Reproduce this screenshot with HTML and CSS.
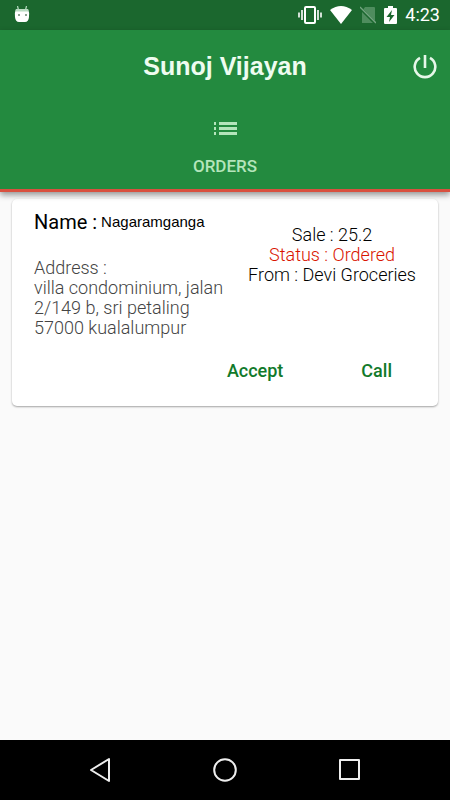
FILE: index.html
```html
<!DOCTYPE html>
<html lang="en">
<head>
    <meta charset="UTF-8">
    <meta name="viewport" content="width=device-width, initial-scale=1.0">
    <title>Orders</title>
    <link rel="stylesheet" href="styles.css">
</head>
<body>

    <!-- Status bar -->
    <div class="status-bar">
        <svg class="robot" width="16" height="18" viewBox="0 0 16 18">
            <path d="M3.500 0l1 4M12.500 0l-1 4" stroke="#b9dcc2" stroke-width="1.200"/>
            <path d="M2 3h12q1.500 3 1 8-.5 5-4 5H5q-3.500 0-4-5-.5-5 1-8z" fill="#fff"/>
            <path d="M2 3h12l.5 2.500h-13z" fill="#b9dcc2"/>
            <circle cx="5" cy="9" r="1" fill="#65836b"/>
            <circle cx="12" cy="9" r="1" fill="#65836b"/>
        </svg>
        <div class="status-icons">
            <svg width="24" height="20" viewBox="0 0 24 20" fill="none" stroke="#fff">
                <rect x="7" y="2" width="10" height="16" rx="1" stroke-width="2"/>
                <path d="M4 5v10M20 5v10" stroke-width="1.600"/>
                <path d="M1 7.500v5M23 7.500v5" stroke-width="1.600"/>
            </svg>
            <svg width="22" height="18" viewBox="0 0 22 18">
                <path d="M0 4Q11-4 22 4L11 18z" fill="#fff"/>
            </svg>
            <svg width="16" height="18" viewBox="0 0 16 18">
                <path d="M5 1h9q1 0 1 1v15H2V5z" fill="#4f8d5e"/>
                <path d="M0 2l15 15" stroke="#1b672e" stroke-width="3"/>
                <path d="M0 1l16 16" stroke="#75a581" stroke-width="1.300"/>
            </svg>
            <svg width="13" height="18" viewBox="0 0 13 18">
                <path d="M4 0h5v2h3q1 0 1 1v14q0 1-1 1H1q-1 0-1-1V3q0-1 1-1h3z" fill="#fff"/>
                <path d="M8 4L2.500 11H6l-1 5 5.500-7H7z" fill="#1b672e"/>
            </svg>
            <span class="clock">4:23</span>
        </div>
    </div>

    <header class="app-header">
        <div class="title-row">
            <h1>Sunoj Vijayan</h1>
            <button class="power-button" aria-label="Log out">
                <svg width="24" height="26" viewBox="0 0 24 26" fill="none" stroke="#e6f7e9" stroke-width="2.600">
                    <path d="M12 2v13"/>
                    <path d="M7 4.800a10.300 10.300 0 1 0 10 0"/>
                </svg>
            </button>
        </div>
        <a href="#orders" class="tab">
            <svg width="24" height="14" viewBox="0 0 24 14" fill="#b4e5bb">
                <path d="M1 0h2v3H1zM6 0h18v3H6zM1 5h2v3H1zM6 5h18v3H6zM1 10h2v3H1zM6 10h18v3H6z"/>
            </svg>
            <span>ORDERS</span>
        </a>
    </header>

    <main id="orders">
        <article class="order-card">
            <div class="order-info">
                <div class="customer">
                    <h2>Name : <span>Nagaramganga</span></h2>
                    <p class="address">Address :<br>villa condominium, jalan<br>2/149 b, sri petaling<br>57000 kualalumpur</p>
                </div>
                <div class="sale">
                    <p>Sale : 25.2</p>
                    <p class="status">Status : Ordered</p>
                    <p>From : Devi Groceries</p>
                </div>
            </div>
            <div class="actions">
                <button>Accept</button>
                <button>Call</button>
            </div>
        </article>
    </main>

    <!-- System buttons -->
    <nav class="nav-bar">
        <button aria-label="Back">
            <svg width="24" height="26" viewBox="0 0 24 26" fill="none" stroke="#eee" stroke-width="2" stroke-linejoin="round">
                <path d="M21 2v22L3 13z"/>
            </svg>
        </button>
        <button aria-label="Home">
            <svg width="24" height="24" viewBox="0 0 24 24" fill="none" stroke="#eee" stroke-width="2">
                <circle cx="12" cy="12" r="10.800"/>
            </svg>
        </button>
        <button aria-label="Recent apps">
            <svg width="24" height="24" viewBox="0 0 24 24" fill="none" stroke="#eee" stroke-width="2" stroke-linejoin="round">
                <rect x="2" y="2" width="19" height="19"/>
            </svg>
        </button>
    </nav>

</body>
</html>
```
FILE: styles.css
```css
* {
    box-sizing: border-box;
}

body {
    display: flex;
    flex-direction: column;
    min-height: 100vh;
    margin: 0;
    font-family: Roboto, sans-serif;
    background-color: #fafafa;
    color: #000;
}

h1, h2, p {
    margin: 0;
    font-weight: 400;
}

button {
    padding: 0;
    border: none;
    background: none;
    font-family: inherit;
    cursor: pointer;
}

svg {
    display: block;
}

.status-bar {
    display: flex;
    justify-content: space-between;
    align-items: center;
    height: 30px;
    padding: 0 10px 0 14px;
    background-color: #1b672e;
    color: white;
}

.status-icons {
    display: flex;
    align-items: center;
    gap: 8px;
}

.clock {
    font-size: 18px;
    line-height: 20px;
}

.app-header {
    position: relative;
    display: flex;
    flex-direction: column;
    align-items: center;
    height: 162px;
    background-color: #238a3f;
    border-bottom: 3px solid #d9503f;
    box-shadow: 0 3px 6px rgba(0, 0, 0, 0.4);
}

.title-row {
    display: grid;
    grid-template-columns: 1fr auto 1fr;
    align-items: center;
    width: 100%;
    height: 72px;
    padding: 0 13px;
}

.title-row h1 {
    grid-column: 2;
    font-family: "Liberation Sans", sans-serif;
    font-size: 25px;
    font-weight: 700;
    color: #eefcf0;
}

.power-button {
    justify-self: end;
}

.tab {
    display: flex;
    flex-direction: column;
    align-items: center;
    gap: 20px;
    padding-top: 20px;
    font-size: 17px;
    font-weight: 500;
    line-height: 20px;
    color: #b4e5bb;
    text-decoration: none;
}

main {
    flex: 1;
    padding: 7px 12px;
}

.order-card {
    padding: 13px 22px 24px;
    background-color: white;
    border-radius: 5px;
    box-shadow: 0 1px 2px rgba(0, 0, 0, 0.35);
}

.order-info {
    display: flex;
    justify-content: space-between;
}

.customer h2 {
    display: flex;
    align-items: center;
    gap: 4px;
    font-size: 20px;
    line-height: 20px;
}

.customer h2 span {
    font-family: "Liberation Sans", sans-serif;
    font-size: 15px;
}

.address {
    margin-top: 26px;
    font-size: 18px;
    font-weight: 300;
    line-height: 20px;
    color: #444;
}

.sale {
    padding-top: 13px;
    font-size: 18px;
    line-height: 20px;
    text-align: center;
}

.sale p {
    font-weight: 300;
}

.sale .status {
    color: #d91400;
}

.actions {
    display: flex;
    justify-content: flex-end;
    gap: 78px;
    padding: 22px 24px 0 0;
}

.actions button {
    font-size: 18px;
    font-weight: 500;
    line-height: 22px;
    color: #117a2b;
}

.nav-bar {
    display: flex;
    justify-content: center;
    align-items: center;
    gap: 101px;
    height: 60px;
    background-color: black;
}
```
